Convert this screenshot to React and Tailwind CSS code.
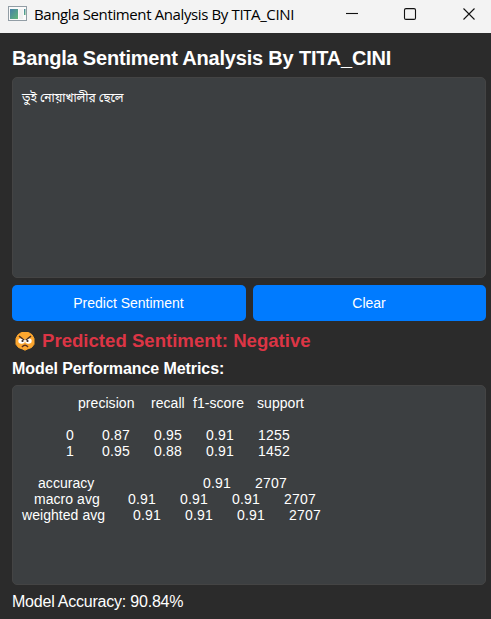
const report = [
  [["precision", 56, 73], ["recall", 0, 42], ["f1-score", 0, 64], ["support", 0, 60]],
  [],
  [["0", 44, 36], ["0.87", 0, 52], ["0.95", 0, 52], ["0.91", 0, 52], ["1255", 0, 40]],
  [["1", 44, 36], ["0.95", 0, 52], ["0.88", 0, 52], ["0.91", 0, 52], ["1452", 0, 40]],
  [],
  [["accuracy", 16, 165], ["0.91", 0, 52], ["2707", 0, 40]],
  [["macro avg", 12, 94], ["0.91", 0, 52], ["0.91", 0, 52], ["0.91", 0, 52], ["2707", 0, 40]],
  [["weighted avg", 0, 111], ["0.91", 0, 52], ["0.91", 0, 52], ["0.91", 0, 52], ["2707", 0, 40]],
];

function WindowIcon() {
  return (
    <svg width="19" height="15" viewBox="0 0 19 15" className="shrink-0">
      <defs>
        <linearGradient id="pane" x1="0" y1="0" x2="1" y2="1">
          <stop offset="0" stopColor="#4580a8" />
          <stop offset="1" stopColor="#62b878" />
        </linearGradient>
      </defs>
      <rect x="0.5" y="0.5" width="18" height="14" fill="#fafafa" stroke="#929da5" />
      <rect x="2" y="3" width="8" height="10" fill="url(#pane)" />
      <rect x="11" y="3" width="4" height="10" fill="#f0f0f0" />
      <rect x="16" y="3" width="1.5" height="6" fill="url(#pane)" />
    </svg>
  );
}

function AngryFace() {
  return (
    <svg width="20" height="19" viewBox="0 0 20 19" className="shrink-0">
      <path d="M6.500 .5h7l3.500 2.200L19 6.500v5.800l-2.500 3.200-4 1.500L10 18.200 7.500 17l-4-1.500L1 12.300V6.500L3 2.700Z" fill="#fca62f" stroke="#fca62f" strokeLinejoin="round" />
      <ellipse cx="6.600" cy="9" rx="3.300" ry="2.800" fill="#fff" />
      <ellipse cx="13.400" cy="9" rx="3.300" ry="2.800" fill="#fff" />
      <path d="M4 4.200 9.200 8M16 4.200 10.800 8" stroke="#4a2f22" strokeWidth="1.500" />
      <circle cx="7.500" cy="9" r="1.100" fill="#35251f" />
      <circle cx="12.500" cy="9" r="1.100" fill="#35251f" />
      <path d="M7 15q3-3.500 6 0" fill="none" stroke="#5a3020" strokeWidth="1.500" />
    </svg>
  );
}

export default function App() {
  return (
    <div className="flex h-[619px] w-[491px] flex-col overflow-hidden bg-[#2b2b2b] font-['Liberation_Sans',Arial,sans-serif] text-white">
      <header className="flex h-[33px] shrink-0 items-start bg-[#f3f3f3] pt-[6px] pl-2 text-black">
        <WindowIcon />
        <h1 className="ml-[7px] w-[312px] shrink-0 font-['Open_Sans','Noto_Sans',sans-serif] text-[15px] leading-[17px] tracking-[-0.38px] whitespace-nowrap">
          Bangla Sentiment Analysis By TITA_CINI
        </h1>
        <svg width="130" height="14" viewBox="0 0 130 14" className="mt-px shrink-0" fill="none" stroke="#111" strokeWidth="1.100">
          <path d="M0 6.500h12" />
          <rect x="58.500" y="1.600" width="11" height="10.800" rx="1.500" />
          <path d="m117.500 1.500 11 11m0-11-11 11" />
        </svg>
      </header>

      <main className="flex flex-col pr-[5px] pl-3">
        <h2 className="mt-[13px] h-[31px] text-[20px] leading-6 font-bold tracking-[-0.2px] whitespace-nowrap">Bangla Sentiment Analysis By TITA_CINI</h2>
        <div className="h-[201px] rounded-[5px] border border-[#444] bg-[#3c3f41] px-[9px] pt-[11px] font-['Noto_Sans_Bengali','Noto_Sans',sans-serif] text-[12px] leading-5">
          তুই নোয়াখালীর ছেলে
        </div>
        <div className="mt-[7px] grid h-9 grid-cols-[234px_233px] gap-[7px] text-[14px]">
          <button className="rounded-[5px] bg-[#007bff] pr-px">Predict Sentiment</button>
          <button className="rounded-[5px] bg-[#007bff] pr-px">Clear</button>
        </div>
        <div className="mt-[10px] flex h-5 items-center pl-[3px] text-[18.6px] leading-5 font-bold text-[#dc3545]">
          <AngryFace />
          <span className="ml-[7px] whitespace-nowrap">Predicted Sentiment: Negative</span>
        </div>
        <h3 className="mt-2 h-[26px] text-[16px] leading-5 font-bold tracking-[-0.08px] whitespace-nowrap">Model Performance Metrics:</h3>
        <div className="h-[200px] rounded-[5px] border border-[#444] bg-[#3c3f41] px-[9px] pt-[9px] text-[14px] leading-4">
          {report.map((row, i) => (
            <div key={i} className="flex h-4 whitespace-pre">
              {row.map(([text, indent, width], j) => (
                <span key={j} className={/^\d/.test(text) ? "shrink-0 tracking-[0.2px]" : "shrink-0 tracking-[0.05px]"} style={{ marginLeft: indent, width }}>{text}</span>
              ))}
            </div>
          ))}
        </div>
        <p className="mt-[7px] text-[16px] leading-5 tracking-[-0.22px] whitespace-nowrap">Model Accuracy: 90.84%</p>
      </main>
    </div>
  );
}
